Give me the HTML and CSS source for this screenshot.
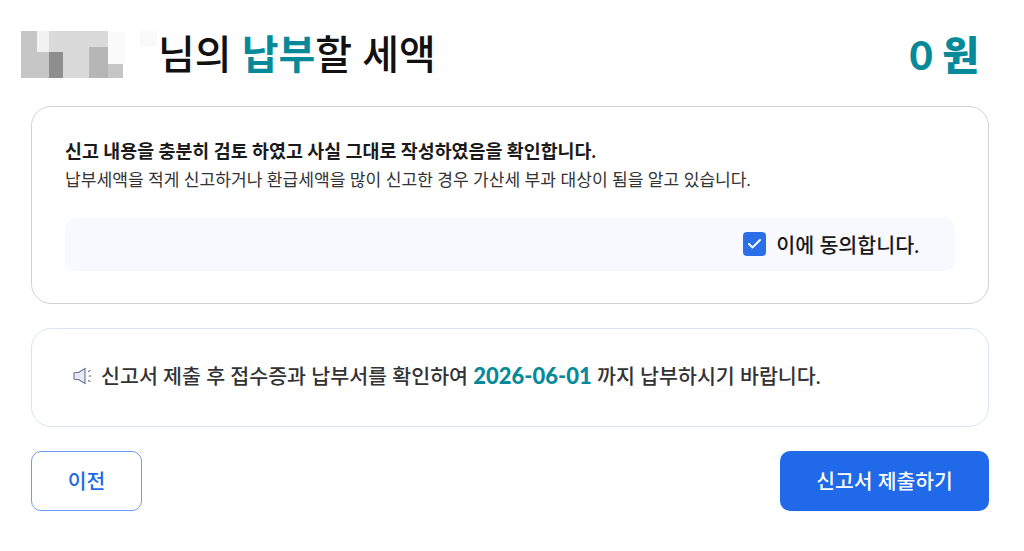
FILE: index.html
```html
<!DOCTYPE html>
<html lang="ko">
<head>
  <meta charset="UTF-8">
  <title>납부할 세액</title>
  <link rel="stylesheet" href="styles.css">
</head>
<body>

  <!-- Title row with the blurred name -->
  <div class="header">
    <div class="title-wrap">
      <svg class="name-mosaic" width="136" height="47" viewBox="0 0 136 47" aria-hidden="true">
        <rect x="0" y="0" width="16" height="47" fill="#c6c6c6"/>
        <rect x="16" y="0" width="12" height="21" fill="#f2f2f2"/>
        <rect x="16" y="21" width="12" height="26" fill="#c6c6c6"/>
        <rect x="28" y="0" width="59" height="47" fill="#dadada"/>
        <rect x="28" y="21" width="14" height="26" fill="#8e8e8e"/>
        <rect x="68" y="16" width="19" height="31" fill="#b6b6b6"/>
        <rect x="87" y="33" width="15" height="14" fill="#c6c6c6"/>
        <rect x="87" y="0" width="17" height="33" fill="#fbfbfb"/>
        <rect x="119" y="0" width="17" height="16" fill="#fafafa"/>
      </svg>
      <h1>님의 <span class="accent strong">납부</span>할 세액</h1>
    </div>
    <div class="amount">0 원</div>
  </div>

  <!-- Confirmation card -->
  <div class="card confirm">
    <p class="confirm-title">신고 내용을 충분히 검토 하였고 사실 그대로 작성하였음을 확인합니다.</p>
    <p class="confirm-desc">납부세액을 적게 신고하거나 환급세액을 많이 신고한 경우 가산세 부과 대상이 됨을 알고 있습니다.</p>
    <div class="agree-bar">
      <span class="checkbox">
        <svg width="17" height="17" viewBox="0 0 17 17" fill="none" stroke="#fff" stroke-width="2" stroke-linecap="round" stroke-linejoin="round"><path d="M3 9l3.600 3.400L14 5"/></svg>
      </span>
      <span class="agree-label">이에 동의합니다.</span>
    </div>
  </div>

  <!-- Notice card -->
  <div class="card notice">
    <svg class="speaker" width="22" height="20" viewBox="0 0 22 20" fill="none" stroke="#69738c" stroke-width="1.100" aria-hidden="true">
      <path d="M2 6.500h3.500L12 2.500v15l-6.500-4H2a1 1 0 0 1-1-1v-5a1 1 0 0 1 1-1z" fill="#e4e9f3"/>
      <path d="M15.500 5.500l1.500-1M16 10h2M15.500 14.500l1.500 1" stroke-linecap="round"/>
    </svg>
    <span class="notice-text">신고서 제출 후 접수증과 납부서를 확인하여 <b class="accent date">2026-06-01</b> 까지 납부하시기 바랍니다.</span>
  </div>

  <!-- Bottom buttons -->
  <div class="actions">
    <button class="btn-prev">이전</button>
    <button class="btn-submit">신고서 제출하기</button>
  </div>

</body>
</html>
```

FILE: styles.css
```css
html, body {
  margin: 0;
  padding: 0;
  background: #fff;
  font-family: Lato, "Noto Sans CJK KR", sans-serif;
  color: #1a1a1a;
}

body {
  height: 551px;
  overflow: hidden;
  padding: 0 35px 0 31px;
  box-sizing: border-box;
}

p {
  margin: 0;
}

.accent {
  color: #068a99;
}
.strong {
  font-weight: 700;
}

/* Title row */
.header {
  display: flex;
  justify-content: space-between;
  align-items: center;
  height: 106px;
  margin-left: -10px;
  padding: 0 10px 0 0;
}
.title-wrap {
  display: flex;
  align-items: center;
  padding-top: 2px;
}
.name-mosaic {
  display: block;
  margin-right: 1px;
}
h1 {
  margin: 0;
  font-size: 40px;
  font-weight: 500;
  line-height: 48px;
  color: #111;
}
.amount {
  font-size: 40px;
  font-weight: 900;
  color: #068a99;
}

/* Cards */
.card {
  box-sizing: border-box;
  background: #fff;
  border-radius: 20px;
}
.confirm {
  height: 198px;
  border: 1px solid #cfd2d6;
  padding: 31px 33px 0;
}
.confirm-title {
  font-size: 18.400px;
  font-weight: 700;
  line-height: 26px;
}
.confirm-desc {
  font-size: 17.100px;
  line-height: 26px;
  margin-top: 3px;
  color: #333;
}
.agree-bar {
  display: flex;
  align-items: center;
  justify-content: flex-end;
  gap: 10px;
  height: 53px;
  margin-top: 25px;
  padding: 0 36px 2px 0;
  box-sizing: border-box;
  background: #f8f9fe;
  border-radius: 10px;
}
.checkbox {
  display: flex;
  align-items: center;
  justify-content: center;
  width: 23px;
  height: 24px;
  background: #2a6fe8;
  border-radius: 4px;
}
.agree-label {
  font-size: 20.600px;
  font-weight: 500;
}

.notice {
  display: flex;
  align-items: center;
  gap: 6px;
  height: 99px;
  margin-top: 24px;
  padding: 0 0 3px 41px;
  border: 1px solid #d9e4f2;
  font-size: 20.600px;
  font-weight: 500;
  color: #333;
}
.notice-text {
  padding-bottom: 2px;
}
.date {
  font-size: 22px;
  font-weight: 900;
}
.speaker {
  display: block;
}

/* Buttons */
.actions {
  display: flex;
  justify-content: space-between;
  margin-top: 24px;
}
button {
  height: 60px;
  padding: 0 0 2px;
  border-radius: 10px;
  font-family: inherit;
  font-size: 20.400px;
  font-weight: 500;
  cursor: pointer;
}
.btn-prev {
  width: 111px;
  background: #fff;
  border: 1px solid #6b9df0;
  color: #2069e8;
}
.btn-submit {
  width: 209px;
  background: #2069e8;
  border: none;
  color: #fff;
}
```
